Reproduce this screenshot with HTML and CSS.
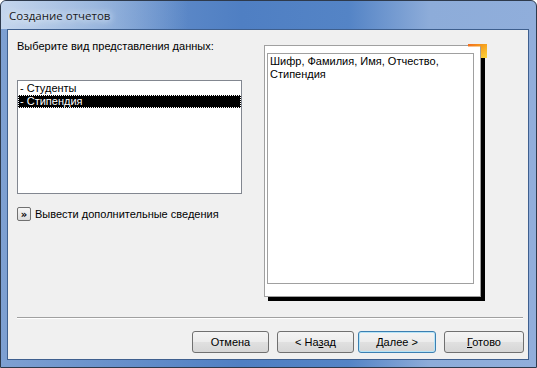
FILE: index.html
```html
<!DOCTYPE html>
<html lang="ru">
  <head>
    <meta charset="UTF-8" />
    <title>Создание отчетов</title>
    <link rel="stylesheet" href="styles.css">
  </head>
  <body>
    <div class="window">
      <div class="title-bar">
        <span class="title">Создание отчетов</span>
      </div>
      <div class="client">
        <div class="main">
          <div class="left-col">
            <div class="label">Выберите вид представления данных:</div>
            <div class="listbox">
              <div class="item">- Студенты</div>
              <div class="item selected">- Стипендия</div>
            </div>
            <div class="more">
              <button class="more-btn" type="button">&raquo;</button>
              <span>Вывести дополнительные сведения</span>
            </div>
          </div>
          <div class="preview">
            <div class="preview-inner">Шифр, Фамилия, Имя, Отчество,<br>Стипендия</div>
            <div class="corner"></div>
          </div>
        </div>
        <div class="separator"></div>
        <div class="buttons">
          <button class="btn" type="button">Отмена</button>
          <button class="btn back" type="button">&lt; На<u>з</u>ад</button>
          <button class="btn default" type="button"><u>Д</u>алее &gt;</button>
          <button class="btn finish" type="button"><u>Г</u>отово</button>
        </div>
      </div>
    </div>
  </body>
</html>
```

FILE: styles.css
```css
/* Page */
body {
  margin: 0;
  background: #ffffff;
  font-family: "Liberation Sans", Arial, sans-serif;
  font-size: 11px;
  color: #000;
}

/* Window frame */
.window {
  width: 537px;
  height: 368px;
  box-sizing: border-box;
  border: 1px solid #2e3a4c;
  border-radius: 6px 6px 0 0;
  background: linear-gradient(to right, #7ea0d2 0%, #4f7fc3 45%, #5484c6 65%, #8dacd9 80%, #90aedb 100%);
  display: flex;
  flex-direction: column;
  overflow: hidden;
}

.title-bar {
  height: 28px;
  display: flex;
  align-items: center;
  padding-left: 8px;
  background: linear-gradient(to right, rgba(220, 232, 246, 0.75) 0%, rgba(200, 218, 240, 0.5) 18%, rgba(255, 255, 255, 0) 35%);
}

.title {
  font-family: "Open Sans", "Noto Sans", sans-serif;
  font-size: 11.5px;
  color: #1a1a1a;
  text-shadow: 0 0 6px #e8f0fa, 0 0 10px #e8f0fa;
}

/* Client area */
.client {
  flex: 1;
  margin: 0 7px 7px 6px;
  background: #f0f0f0;
  border: 1px solid #3e5f8e;
  display: flex;
  flex-direction: column;
  padding: 0 4px 6px 9px;
}

.main {
  flex: 1;
  display: flex;
}

.left-col {
  width: 225px;
  padding-top: 9px;
}

.label {
  height: 14px;
  line-height: 14px;
}

/* List box */
.listbox {
  margin-top: 27px;
  height: 111px;
  background: #fff;
  border: 1px solid #828790;
  padding-top: 1px;
}

.item {
  height: 13px;
  line-height: 13px;
  padding-left: 2px;
  white-space: nowrap;
}

.item.selected {
  background: #000;
  color: #fff;
  outline: 1px dotted #fff;
  outline-offset: -1px;
}

/* More details */
.more {
  margin-top: 13px;
  display: flex;
  align-items: center;
  gap: 4px;
}

.more-btn {
  width: 14px;
  height: 14px;
  padding: 0;
  border: 1px solid #707070;
  border-radius: 2px;
  background: linear-gradient(#f6f6f6, #dcdcdc);
  font-family: "DejaVu Sans", sans-serif;
  font-size: 10px;
  font-weight: bold;
  line-height: 11px;
  color: #000;
}

/* Preview */
.preview {
  position: relative;
  margin: 15px 0 0 22px;
  width: 217px;
  height: 252px;
  box-sizing: border-box;
  background: #fff;
  border: 1px solid #a0a0a0;
  box-shadow: 4px 4px 0 #000;
  padding: 7px 6px 0 2px;
}

.preview-inner {
  height: 231px;
  box-sizing: border-box;
  border: 1px solid #a0a0a0;
  padding: 1px 2px;
  line-height: 13px;
}

.corner {
  position: absolute;
  top: -2px;
  right: -7px;
  width: 19px;
  height: 14px;
  background: linear-gradient(to bottom right, #f26b1d 0%, #f59a1c 40%, #fcd63a 100%);
  clip-path: polygon(0 0, 100% 0, 100% 100%, 68% 100%, 68% 18%, 0 18%);
}

/* Separator */
.separator {
  height: 1px;
  background: #a0a0a0;
  border-bottom: 1px solid #fff;
  margin: 0 1px 12px 0;
}

/* Buttons */
.buttons {
  display: flex;
  justify-content: flex-end;
}

.btn {
  width: 77px;
  height: 22px;
  padding: 0;
  border: 1px solid #707070;
  border-radius: 3px;
  background: linear-gradient(#f4f4f4 0%, #ececec 48%, #e0e0e0 52%, #d6d6d6 100%);
  font-family: "Liberation Sans", Arial, sans-serif;
  font-size: 11px;
  color: #000;
}

.btn.back {
  margin-left: 8px;
}

.btn.default {
  margin-left: 4px;
  width: 78px;
  border-color: #3c7fb1;
  box-shadow: inset 0 0 0 1px #b6e4f7;
  background: linear-gradient(#f4f4f4 0%, #ececec 48%, #e0e0e0 52%, #d6d6d6 100%);
}

.btn.finish {
  margin-left: 8px;
  width: 80px;
}
```
